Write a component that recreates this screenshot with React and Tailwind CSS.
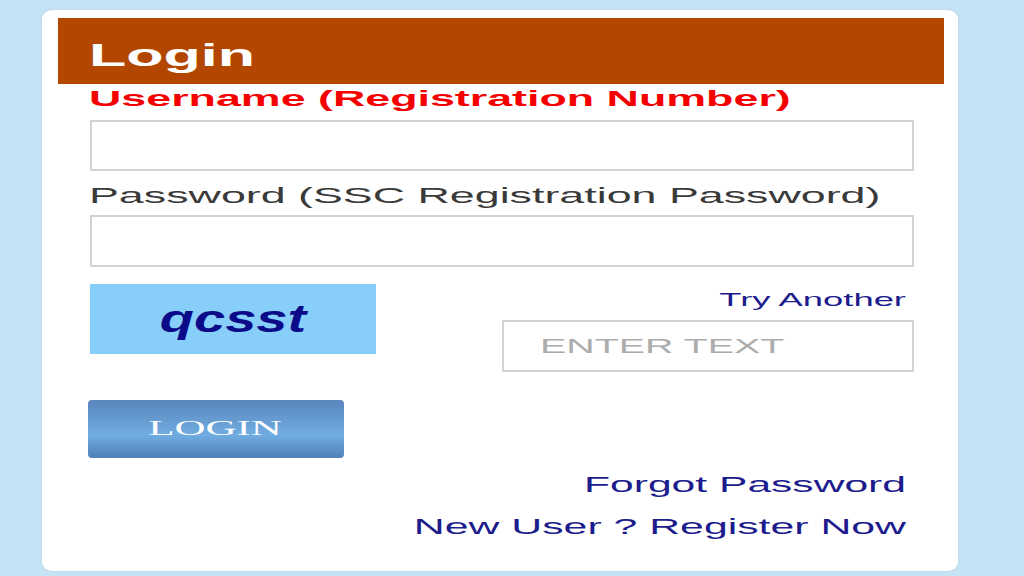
export default function App() {
  return (
    <div className="w-[1024px] h-[576px] bg-[#c6e2f5] overflow-hidden font-['Liberation_Sans',Arial,sans-serif]">
      <div className="w-[512px] h-[576px] origin-top-left scale-x-200 pt-[10px] pl-[20.5px]">
        <div className="w-[458.5px] h-[561px] bg-white rounded-[5px/9px] pt-[8px] pl-[8.5px] pr-[7.5px] shadow-[0_0_2px_rgba(0,0,0,0.08)]">
          <div className="h-[66px] bg-[#b34700] pl-[15.5px] pt-[21.5px]">
            <h1 className="text-[30.5px] leading-[30px] font-bold text-white">Login</h1>
          </div>
          <div className="pl-[15.5px] pr-[15px]">
            <label className="block mt-[4px] text-[22.4px] leading-[22px] font-bold text-[#f50000] whitespace-nowrap">
              Username (Registration Number)
            </label>
            <input
              type="text"
              className="block w-full mt-[10px] h-[51px] border-x border-y-2 border-[#d2d2d2] bg-white outline-none"
            />
            <label className="block mt-[14px] text-[22.4px] leading-[22px] text-[#3a3a3a] whitespace-nowrap">
              Password (SSC Registration Password)
            </label>
            <input
              type="password"
              className="block w-full mt-[8px] h-[52px] border-x border-y-2 border-[#d2d2d2] bg-white outline-none"
            />
            <div className="mt-[17px] flex justify-between">
              <div className="ml-[0.5px] w-[143px] h-[70px] bg-[#87cefa] flex items-center justify-center">
                <span className="inline-block text-[28px] leading-none font-bold italic text-[#0b0b8a] scale-y-[1.4]">
                  qcsst
                </span>
              </div>
              <div className="w-[206px] pt-[7px]">
                <div className="text-right pr-[3.5px] text-[18.2px] leading-[18px] text-[#1c1c8c]">Try Another</div>
                <input
                  type="text"
                  placeholder="ENTER TEXT"
                  className="block w-full mt-[11px] h-[52px] border-x border-y-2 border-[#d2d2d2] bg-white pl-[18.5px] text-[19.7px] outline-none placeholder:text-[#acacac]"
                />
              </div>
            </div>
            <button className="block mt-[28px] -ml-[1px] w-[128px] h-[58px] rounded-[2px/4px] bg-gradient-to-b from-[#5985bb] via-[#71ade2] via-60% to-[#5080b7] text-white text-[21.5px] font-['Liberation_Serif',serif] leading-none">
              LOGIN
            </button>
            <div className="mt-[17px] pr-[3.5px] text-right text-[21.3px] leading-[21px] text-[#1c1c8c]">Forgot Password</div>
            <div className="mt-[21px] pr-[3.5px] text-right text-[21.4px] leading-[21px] text-[#1c1c8c] whitespace-nowrap">
              New User ? Register Now
            </div>
          </div>
        </div>
      </div>
    </div>
  );
}
